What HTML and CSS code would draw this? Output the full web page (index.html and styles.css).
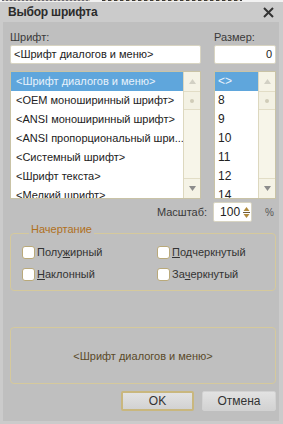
FILE: index.html
```html
<!DOCTYPE html>
<html lang="ru">
<head>
    <meta charset="UTF-8">
    <meta name="viewport" content="width=device-width, initial-scale=1.0">
    <title>Выбор шрифта</title>
    <link rel="stylesheet" href="styles.css">
</head>
<body>
    <div class="strip"><span class="seg seg-a"></span><span class="seg seg-b"></span></div>
    <div class="window">
        <div class="titlebar">
            <span class="title">Выбор шрифта</span>
            <svg class="close" width="11" height="11" viewBox="0 0 11 11">
                <path d="M1 1 L10 10 M10 1 L1 10" stroke="#333" stroke-width="2" fill="none"/>
            </svg>
        </div>
        <div class="content">
            <div class="font-grid">
                <div class="col">
                    <div class="lbl">Шрифт:</div>
                    <div class="field">&lt;Шрифт диалогов и меню&gt;</div>
                    <div class="list">
                        <ul class="items">
                            <li class="sel">&lt;Шрифт диалогов и меню&gt;</li>
                            <li>&lt;OEM моноширинный шрифт&gt;</li>
                            <li>&lt;ANSI моноширинный шрифт&gt;</li>
                            <li>&lt;ANSI пропорциональный шри...</li>
                            <li>&lt;Системный шрифт&gt;</li>
                            <li>&lt;Шрифт текста&gt;</li>
                            <li>&lt;Мелкий шрифт&gt;</li>
                        </ul>
                        <div class="scroll">
                            <div class="sbtn"><svg width="7" height="5" viewBox="0 0 7 5"><path d="M3.5 0 L7 5 L0 5 Z" fill="#d2d0c4"/></svg></div>
                            <div class="thumb"><span class="dot"></span></div>
                            <div class="track"></div>
                            <div class="sbtn"><svg width="7" height="5" viewBox="0 0 7 5"><path d="M0 0 L7 0 L3.5 5 Z" fill="#8c8c8c"/></svg></div>
                        </div>
                    </div>
                </div>
                <div class="col">
                    <div class="lbl">Размер:</div>
                    <div class="field num">0</div>
                    <div class="list">
                        <ul class="items narrow">
                            <li class="sel">&lt;&gt;</li>
                            <li>8</li>
                            <li>9</li>
                            <li>10</li>
                            <li>11</li>
                            <li>12</li>
                            <li>14</li>
                        </ul>
                        <div class="scroll">
                            <div class="sbtn"><svg width="7" height="5" viewBox="0 0 7 5"><path d="M3.5 0 L7 5 L0 5 Z" fill="#d2d0c4"/></svg></div>
                            <div class="thumb"><span class="dot"></span></div>
                            <div class="track"></div>
                            <div class="sbtn"><svg width="7" height="5" viewBox="0 0 7 5"><path d="M0 0 L7 0 L3.5 5 Z" fill="#8c8c8c"/></svg></div>
                        </div>
                    </div>
                </div>
            </div>

            <div class="scale-row">
                <span class="scale-lbl">Масштаб:</span>
                <div class="spin">
                    <span class="spin-val">100</span>
                    <svg class="spin-arrows" width="7" height="13" viewBox="0 0 7 13">
                        <path d="M3.5 1 L6.5 5 L0.5 5 Z" fill="#b08a3c"/>
                        <path d="M0 6.5 L7 6.5" stroke="#6b5a3a" stroke-width="1"/>
                        <path d="M0.5 8 L6.5 8 L3.5 12 Z" fill="#b08a3c"/>
                    </svg>
                </div>
                <span class="pct">%</span>
            </div>

            <fieldset class="group">
                <legend>Начертание</legend>
                <div class="checks">
                    <label class="check"><span class="box"></span>Полу<u>ж</u>ирный</label>
                    <label class="check"><span class="box"></span><u>П</u>одчеркнутый</label>
                    <label class="check"><span class="box"></span><u>Н</u>аклонный</label>
                    <label class="check"><span class="box"></span>За<u>ч</u>еркнутый</label>
                </div>
            </fieldset>

            <div class="preview">&lt;Шрифт диалогов и меню&gt;</div>

            <div class="buttons">
                <button class="btn btn-default">OK</button>
                <button class="btn">Отмена</button>
            </div>
        </div>
    </div>
</body>
</html>
```

FILE: styles.css
```css
body {
    margin: 0;
    padding: 0;
    font-family: "Liberation Sans", Arial, sans-serif;
    font-size: 11px;
    color: #333333;
    background: #cbcbcb;
    width: 283px;
    height: 424px;
    overflow: hidden;
}

.strip {
    height: 2px;
    background: #f2f2f2;
    display: flex;
}

.seg {
    height: 1px;
    display: block;
}

.seg-a {
    width: 88px;
    margin-left: 2px;
    background: repeating-linear-gradient(90deg, #6a6a7a 0 2px, #c8c0b0 2px 4px);
}

.seg-b {
    width: 140px;
    margin-left: 12px;
    background: repeating-linear-gradient(90deg, #3a3a3a 0 3px, #b89a6a 3px 4px, #dddddd 4px 6px);
}

.window {
    padding: 0 4px 3px 3px;
}

.titlebar {
    height: 20px;
    display: flex;
    align-items: center;
    justify-content: space-between;
    padding: 0 5px 0 5px;
}

.title {
    font-weight: bold;
    font-size: 12px;
    letter-spacing: -0.2px;
    color: #2b2b2b;
}

.close {
    display: block;
    margin-top: 1px;
}

.content {
    background: #bfbfbf;
    height: 399px;
    padding: 8px 3px 0 7px;
    box-sizing: border-box;
}

.font-grid {
    display: grid;
    grid-template-columns: 191px 62px;
    column-gap: 13px;
}

.lbl {
    line-height: 14px;
    height: 14px;
    color: #3a3a3a;
}

.field {
    margin-top: 1px;
    height: 19px;
    box-sizing: border-box;
    background: #ffffff;
    border: 1px solid #d8d4c2;
    border-radius: 2px;
    padding: 0 3px;
    line-height: 17px;
    color: #222222;
    white-space: nowrap;
    overflow: hidden;
}

.field.num {
    text-align: right;
}

.list {
    margin-top: 7px;
    height: 128px;
    box-sizing: border-box;
    border: 1px solid #c9c3a6;
    background: #ffffff;
    display: flex;
    overflow: hidden;
}

.items {
    list-style: none;
    margin: 0;
    padding: 0;
    flex: 1;
    min-width: 0;
}

.items li {
    height: 19px;
    line-height: 19px;
    padding-left: 5px;
    white-space: nowrap;
    overflow: hidden;
    color: #222222;
}

.items.narrow li {
    padding-left: 3px;
    font-size: 12px;
}

.items li.sel {
    background: #5fa6dc;
    color: #e8f2fb;
}

.scroll {
    width: 16px;
    flex-shrink: 0;
    background: #f7f5e9;
    border-left: 1px solid #ddd8bf;
    display: flex;
    flex-direction: column;
}

.sbtn {
    height: 19px;
    display: flex;
    align-items: center;
    justify-content: center;
    background: #f5f3e6;
}

.sbtn:last-child {
    border-top: 1px solid #e2ddc6;
}

.thumb {
    height: 17px;
    border-top: 1px solid #e2ddc6;
    border-bottom: 1px solid #e2ddc6;
    display: flex;
    align-items: center;
    justify-content: center;
    background: #f3f1e3;
}

.dot {
    width: 4px;
    height: 4px;
    border-radius: 50%;
    background: #d0ccb8;
}

.track {
    flex: 1;
}

.scale-row {
    margin-top: 3px;
    height: 20px;
    display: flex;
    align-items: center;
    justify-content: flex-end;
    padding-right: 2px;
}

.scale-lbl {
    color: #3a3a3a;
    margin-right: 6px;
}

.spin {
    width: 39px;
    flex-shrink: 0;
    height: 20px;
    box-sizing: border-box;
    background: #ffffff;
    border: 1px solid #d8d4c2;
    border-radius: 2px;
    display: flex;
    align-items: center;
    justify-content: flex-end;
    padding-right: 1px;
}

.spin-val {
    color: #222222;
    font-size: 12px;
    margin-right: 3px;
}

.spin-arrows {
    display: block;
}

.pct {
    margin-left: 13px;
    font-size: 10px;
    color: #555555;
}

.group {
    margin: 1px 0 0 0;
    padding: 0 0 8px 11px;
    border: 1px solid #d5c99c;
    border-radius: 4px;
    height: 68px;
    box-sizing: border-box;
}

.group legend {
    margin-left: 7px;
    padding: 0 2px 8px 2px;
    line-height: 12px;
    color: #b0701c;
}

.checks {
    display: grid;
    grid-template-columns: 135px 1fr;
    grid-auto-rows: 16px;
    row-gap: 6px;
    padding-top: 1px;
}

.check {
    display: flex;
    align-items: center;
    color: #333333;
}

.box {
    width: 11px;
    height: 11px;
    background: #ffffff;
    border: 1px solid #b9a97a;
    border-radius: 3px;
    margin-right: 2px;
}

.check u {
    text-decoration-thickness: 1px;
    text-underline-offset: 1px;
}

.preview {
    margin-top: 36px;
    height: 57px;
    box-sizing: border-box;
    border: 1px solid #d5c99c;
    border-radius: 4px;
    display: flex;
    align-items: center;
    justify-content: center;
    color: #5a4a2a;
}

.buttons {
    margin-top: 7px;
    display: flex;
    justify-content: flex-end;
    gap: 8px;
}

.btn {
    font-family: "Liberation Sans", Arial, sans-serif;
    font-size: 12px;
    color: #333333;
    width: 74px;
    height: 20px;
    padding: 0;
    border: 1px solid #d2d2d2;
    border-radius: 2px;
    background: linear-gradient(#e2e2e2, #d2d2d2);
}

.btn-default {
    width: 73px;
    border: 2px solid #c9b77e;
}
```
